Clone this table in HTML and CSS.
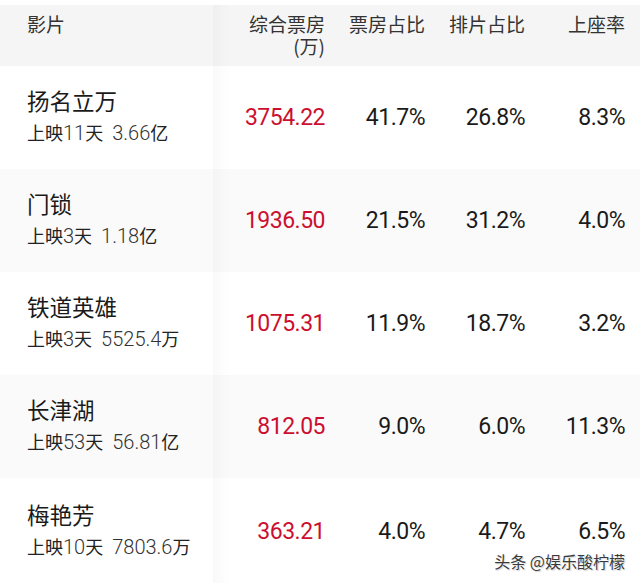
FILE: index.html
```html
<!DOCTYPE html>
<html lang="zh-CN">
<head>
<meta charset="utf-8">
<title>票房</title>
<link rel="stylesheet" href="styles.css">
</head>
<body>
<div class="table">
  <div class="row head">
    <div class="cell name-col">影片</div>
    <div class="cell num"><span class="hl">综合票房</span><span class="hl">(万)</span></div>
    <div class="cell num">票房占比</div>
    <div class="cell num">排片占比</div>
    <div class="cell num">上座率</div>
  </div>
  <div class="row">
    <div class="cell name-col"><div class="title">扬名立万</div><div class="sub">上映<span class="d">11</span>天<span class="amt">3.66</span>亿</div></div>
    <div class="cell num val red">3754.22</div>
    <div class="cell num val">41.7%</div>
    <div class="cell num val">26.8%</div>
    <div class="cell num val">8.3%</div>
  </div>
  <div class="row alt">
    <div class="cell name-col"><div class="title">门锁</div><div class="sub">上映<span class="d">3</span>天<span class="amt">1.18</span>亿</div></div>
    <div class="cell num val red">1936.50</div>
    <div class="cell num val">21.5%</div>
    <div class="cell num val">31.2%</div>
    <div class="cell num val">4.0%</div>
  </div>
  <div class="row">
    <div class="cell name-col"><div class="title">铁道英雄</div><div class="sub">上映<span class="d">3</span>天<span class="amt">5525.4</span>万</div></div>
    <div class="cell num val red">1075.31</div>
    <div class="cell num val">11.9%</div>
    <div class="cell num val">18.7%</div>
    <div class="cell num val">3.2%</div>
  </div>
  <div class="row alt">
    <div class="cell name-col"><div class="title">长津湖</div><div class="sub">上映<span class="d">53</span>天<span class="amt">56.81</span>亿</div></div>
    <div class="cell num val red">812.05</div>
    <div class="cell num val">9.0%</div>
    <div class="cell num val">6.0%</div>
    <div class="cell num val">11.3%</div>
  </div>
  <div class="row last">
    <div class="cell name-col"><div class="title">梅艳芳</div><div class="sub">上映<span class="d">10</span>天<span class="amt">7803.6</span>万</div></div>
    <div class="cell num val red">363.21</div>
    <div class="cell num val">4.0%</div>
    <div class="cell num val">4.7%</div>
    <div class="cell num val">6.5%</div>
  </div>
  <div class="watermark">头条 @娱乐酸柠檬</div>
</div>
</body>
</html>
```
FILE: styles.css
```css
* { box-sizing: border-box; }
html, body { margin: 0; padding: 0; background: #fff; }
body {
  width: 640px;
  height: 583px;
  overflow: hidden;
  font-family: "Noto Sans CJK SC", sans-serif;
  color: #222;
}
.table {
  position: relative;
  padding-top: 5px;
  height: 583px;
}
.row {
  display: grid;
  grid-template-columns: 213px 112px 100px 100px 100px;
  padding-right: 15px;
  height: 103px;
  background: #fff;
}
.row.alt { background: #fafafa; }
.row.last { height: 106px; }
.row.head {
  height: 61px;
  background: #f5f5f5;
  font-size: 19px;
  line-height: 22px;
  color: #333;
}
.cell { position: relative; }
.head .cell { padding-top: 8px; }
.hl { display: block; }
.hl + .hl { margin-top: 0; }
.name-col { padding-left: 27px; }
.row:not(.head) .name-col {
  display: flex;
  flex-direction: column;
  justify-content: center;
  padding-bottom: 2px;
}
.num { text-align: right; }
.row .cell:nth-child(2)::before {
  content: "";
  position: absolute;
  left: 0;
  top: 0;
  bottom: 0;
  width: 18px;
  background: linear-gradient(to right, rgba(0,0,0,0.025), rgba(0,0,0,0));
}
.title {
  font-size: 22.5px;
  line-height: 32px;
  color: #1a1a1a;
}
.sub {
  font-size: 18px;
  line-height: 32px;
  color: #222;
  white-space: pre;
}
.sub .d, .sub .amt {
  font-family: "Roboto", sans-serif;
  font-weight: 300;
  font-size: 20px;
  color: #333;
}
.sub .amt { margin-left: 9px; }
.val {
  display: flex;
  align-items: center;
  justify-content: flex-end;
  font-family: "Roboto", sans-serif;
  font-size: 23px;
  color: #1a1a1a;
  letter-spacing: -0.5px;
}
.val.red { color: #cc0f2f; }
.watermark {
  position: absolute;
  right: 15px;
  top: 549px;
  font-size: 16px;
  line-height: 24px;
  color: #3a3a3a;
  text-shadow: 0 0 2px #fff, 0 0 2px #fff, 1px 1px 1px rgba(0,0,0,0.25);
}
```
